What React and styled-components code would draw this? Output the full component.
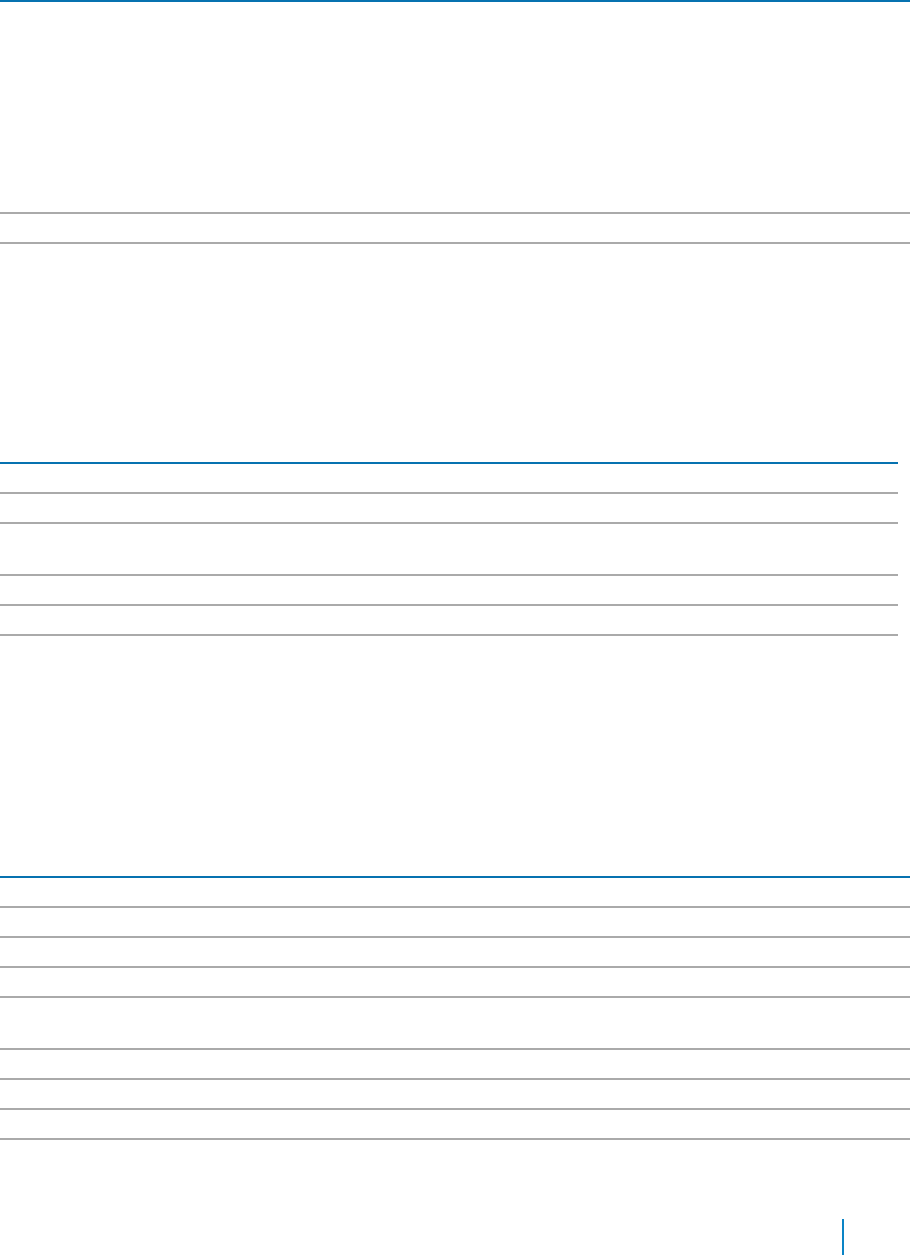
import React from "react";
import styled, { createGlobalStyle } from "styled-components";

const GlobalStyle = createGlobalStyle`
    html, body {
        margin: 0;
        padding: 0;
        background: #ffffff;
        font-family: "Liberation Sans", Arial, sans-serif;
    }
`;

const tables = [
    { width: "910px", gapBefore: 0, rows: [210, 28] },
    { width: "898px", gapBefore: 218, rows: [28, 28, 50, 28, 28] },
    { width: "910px", gapBefore: 240, rows: [28, 28, 28, 28, 50, 28, 28, 28] },
];

function App() {
    return (
        <Page>
            <GlobalStyle />
            {tables.map((table, i) => (
                <Table key={i} $width={table.width} $gap={table.gapBefore}>
                    {table.rows.map((h, j) => (
                        <Row key={j} $height={h} />
                    ))}
                </Table>
            ))}
            <Footer>
                <Divider />
            </Footer>
        </Page>
    );
}

const Page = styled.div`
    width: 910px;
    display: flex;
    flex-direction: column;
`;

const Table = styled.div`
    width: ${(p) => p.$width};
    margin-top: ${(p) => p.$gap}px;
    border-top: 2px solid #0672b0;
    display: flex;
    flex-direction: column;
`;

const Row = styled.div`
    height: ${(p) => p.$height}px;
    border-bottom: 2px solid #aaaaaa;
`;

const Footer = styled.div`
    margin-top: 79px;
    height: 36px;
    display: flex;
    padding-left: 842px;
`;

const Divider = styled.div`
    width: 2px;
    height: 100%;
    background: #0a84c6;
`;

export default App;
